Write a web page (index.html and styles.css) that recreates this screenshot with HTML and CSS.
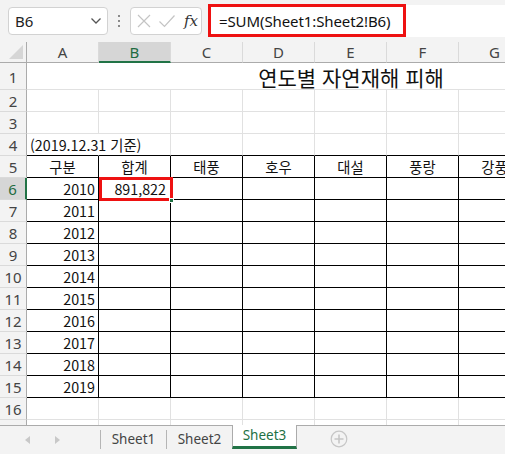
FILE: index.html
```html
<!DOCTYPE html>
<html lang="ko">
<head>
<meta charset="utf-8">
<link rel="stylesheet" href="styles.css">
</head>
<body>
<div class="app">
  <div class="toolbar">
    <div class="namebox">
      <span class="name">B6</span>
      <svg class="chev" width="12" height="8" viewBox="0 0 12 8"><path d="M1.5 1.5 L6 6 L10.5 1.5" fill="none" stroke="#555" stroke-width="1.3"/></svg>
    </div>
    <div class="dots"><i></i><i></i><i></i></div>
    <div class="fxbox">
      <svg width="16" height="16" viewBox="0 0 16 16"><path d="M2 2 L14 14 M14 2 L2 14" stroke="#c4c4c4" stroke-width="1.2" fill="none"/></svg>
      <svg width="18" height="16" viewBox="0 0 18 16"><path d="M1.5 8.5 L6.5 13.5 L16.5 2.5" stroke="#c4c4c4" stroke-width="1.2" fill="none"/></svg>
      <span class="fx">fx</span>
    </div>
    <div class="formula"><span class="ftext">=SUM(Sheet1:Sheet2!B6)</span><span class="fmark"></span></div>
  </div>

  <div class="sheet">
    <div class="corner"><svg width="14" height="14" viewBox="0 0 14 14"><path d="M14 0 L14 14 L0 14 Z" fill="#d6d6d6"/></svg></div>
    <div class="ch">A</div><div class="ch sel">B</div><div class="ch">C</div><div class="ch">D</div><div class="ch">E</div><div class="ch">F</div><div class="ch">G</div><div class="ch">H</div><div class="ch">I</div>

    <div class="rh r1">1</div>
    <div class="c merged r1"><span class="title">연도별 자연재해 피해</span></div>

    <div class="rh">2</div><div class="c"></div><div class="c"></div><div class="c"></div><div class="c"></div><div class="c"></div><div class="c"></div><div class="c"></div><div class="c"></div><div class="c"></div>
    <div class="rh">3</div><div class="c"></div><div class="c"></div><div class="c"></div><div class="c"></div><div class="c"></div><div class="c"></div><div class="c"></div><div class="c"></div><div class="c"></div>
    <div class="rh">4</div><div class="c tt noright"><span class="over">(2019.12.31 기준)</span></div><div class="c tt"></div><div class="c tt"></div><div class="c tt"></div><div class="c tt"></div><div class="c tt"></div><div class="c tt"></div><div class="c tt"></div><div class="c"></div>

    <div class="rh">5</div><div class="c b ctr">구분</div><div class="c b ctr">합계</div><div class="c b ctr">태풍</div><div class="c b ctr">호우</div><div class="c b ctr">대설</div><div class="c b ctr">풍랑</div><div class="c b ctr">강풍</div><div class="c b ctr">지진</div><div class="c"></div>

    <div class="rh rsel">6</div><div class="c b num">2010</div><div class="c b num active">891,822<span class="mark"></span><span class="handle"></span></div><div class="c b"></div><div class="c b"></div><div class="c b"></div><div class="c b"></div><div class="c b"></div><div class="c b"></div><div class="c"></div>
    <div class="rh">7</div><div class="c b num">2011</div><div class="c b"></div><div class="c b"></div><div class="c b"></div><div class="c b"></div><div class="c b"></div><div class="c b"></div><div class="c b"></div><div class="c"></div>
    <div class="rh">8</div><div class="c b num">2012</div><div class="c b"></div><div class="c b"></div><div class="c b"></div><div class="c b"></div><div class="c b"></div><div class="c b"></div><div class="c b"></div><div class="c"></div>
    <div class="rh">9</div><div class="c b num">2013</div><div class="c b"></div><div class="c b"></div><div class="c b"></div><div class="c b"></div><div class="c b"></div><div class="c b"></div><div class="c b"></div><div class="c"></div>
    <div class="rh">10</div><div class="c b num">2014</div><div class="c b"></div><div class="c b"></div><div class="c b"></div><div class="c b"></div><div class="c b"></div><div class="c b"></div><div class="c b"></div><div class="c"></div>
    <div class="rh">11</div><div class="c b num">2015</div><div class="c b"></div><div class="c b"></div><div class="c b"></div><div class="c b"></div><div class="c b"></div><div class="c b"></div><div class="c b"></div><div class="c"></div>
    <div class="rh">12</div><div class="c b num">2016</div><div class="c b"></div><div class="c b"></div><div class="c b"></div><div class="c b"></div><div class="c b"></div><div class="c b"></div><div class="c b"></div><div class="c"></div>
    <div class="rh">13</div><div class="c b num">2017</div><div class="c b"></div><div class="c b"></div><div class="c b"></div><div class="c b"></div><div class="c b"></div><div class="c b"></div><div class="c b"></div><div class="c"></div>
    <div class="rh">14</div><div class="c b num">2018</div><div class="c b"></div><div class="c b"></div><div class="c b"></div><div class="c b"></div><div class="c b"></div><div class="c b"></div><div class="c b"></div><div class="c"></div>
    <div class="rh">15</div><div class="c b num">2019</div><div class="c b"></div><div class="c b"></div><div class="c b"></div><div class="c b"></div><div class="c b"></div><div class="c b"></div><div class="c b"></div><div class="c"></div>
    <div class="rh">16</div><div class="c"></div><div class="c"></div><div class="c"></div><div class="c"></div><div class="c"></div><div class="c"></div><div class="c"></div><div class="c"></div><div class="c"></div>
    <div class="rh">17</div><div class="c"></div><div class="c"></div><div class="c"></div><div class="c"></div><div class="c"></div><div class="c"></div><div class="c"></div><div class="c"></div><div class="c"></div>
  </div>

  <div class="tabs">
    <div class="arrows">
      <svg width="6" height="8" viewBox="0 0 6 8"><path d="M5 0 L5 8 L0 4 Z" fill="#c8c8c8"/></svg>
      <svg width="6" height="8" viewBox="0 0 6 8"><path d="M1 0 L1 8 L6 4 Z" fill="#c8c8c8"/></svg>
    </div>
    <div class="tab">Sheet1</div>
    <div class="tab">Sheet2</div>
    <div class="tab on">Sheet3</div>
    <div class="add">
      <svg width="18" height="18" viewBox="0 0 18 18"><circle cx="9" cy="9" r="7.8" fill="none" stroke="#c6c6c6" stroke-width="1.2"/><path d="M9 4.5 V13.5 M4.5 9 H13.5" stroke="#c6c6c6" stroke-width="1.6"/></svg>
    </div>
  </div>
</div>
</body>
</html>
```

FILE: styles.css
```css
html, body {
  margin: 0;
  padding: 0;
  background: #fff;
}
body {
  width: 505px;
  height: 454px;
  overflow: hidden;
  font-family: "Noto Sans", "Open Sans", sans-serif;
}
.app {
  display: flex;
  flex-direction: column;
  width: 505px;
  height: 454px;
  overflow: hidden;
}
.toolbar {
  height: 42px;
  flex: none;
  background: #f3f3f3;
  display: flex;
  align-items: flex-start;
  padding-left: 8px;
  box-sizing: border-box;
}
.namebox {
  margin-top: 7px;
  width: 100px;
  height: 28px;
  box-sizing: border-box;
  background: #fff;
  border: 1px solid #d2d2d2;
  border-radius: 4px;
  display: flex;
  align-items: center;
  justify-content: space-between;
  padding: 0 5px 0 6px;
}
.name {
  font-size: 15px;
  color: #222;
}
.dots {
  width: 22px;
  height: 42px;
  display: flex;
  flex-direction: column;
  align-items: center;
  justify-content: center;
  gap: 3px;
}
.dots i {
  display: block;
  width: 2px;
  height: 2px;
  background: #8a8a8a;
}
.fxbox {
  margin-top: 7px;
  width: 72px;
  height: 28px;
  box-sizing: border-box;
  background: #fff;
  border: 1px solid #d2d2d2;
  border-radius: 4px;
  display: flex;
  align-items: center;
  gap: 6px;
  padding-left: 5px;
}
.fx {
  font-family: "DejaVu Serif", "Liberation Serif", serif;
  font-style: italic;
  font-size: 15px;
  color: #333;
  margin-left: 2px;
}
.formula {
  margin-top: 5px;
  margin-left: 6px;
  flex: 1;
  height: 32px;
  background: #fff;
  position: relative;
  display: flex;
  align-items: center;
  padding-left: 11px;
}
.ftext {
  font-size: 15px;
  color: #111;
  letter-spacing: -0.1px;
}
.fmark {
  position: absolute;
  left: 0;
  top: -1px;
  width: 198px;
  height: 33px;
  box-sizing: border-box;
  border: 3px solid #ee1111;
}

.sheet {
  flex: none;
  height: 383px;
  overflow: hidden;
  display: grid;
  grid-template-columns: 27px repeat(9, 72px);
  grid-template-rows: 21px 27px repeat(16, 22px);
  width: 675px;
  font-family: "Noto Sans CJK KR", "Noto Sans", sans-serif;
  font-size: 14.3px;
  color: #111;
}
.corner {
  background: #f3f3f3;
  border-right: 1px solid #ababab;
  border-bottom: 1px solid #ababab;
  box-sizing: border-box;
  display: flex;
  align-items: flex-end;
  justify-content: flex-end;
  padding: 0 3px 3px 0;
}
.ch {
  background: #f3f3f3;
  border-right: 1px solid #dadada;
  border-bottom: 1px solid #ababab;
  box-sizing: border-box;
  font-family: "Noto Sans", "Open Sans", sans-serif;
  font-size: 15px;
  color: #444;
  display: flex;
  align-items: center;
  justify-content: center;
}
.ch.sel {
  background: #d6d6d6;
  color: #1e6b41;
  border-bottom: 2px solid #217346;
}
.rh {
  background: #f3f3f3;
  border-right: 1px solid #ababab;
  border-bottom: 1px solid #dadada;
  box-sizing: border-box;
  font-family: "Noto Sans", "Open Sans", sans-serif;
  font-size: 15px;
  color: #444;
  display: flex;
  align-items: center;
  justify-content: center;
  padding-top: 1px;
}
.rh.rsel {
  background: #d6d6d6;
  color: #1e6b41;
  border-right: 2px solid #217346;
}
.c {
  box-sizing: border-box;
  border-right: 1px solid #e1e1e1;
  border-bottom: 1px solid #e1e1e1;
  display: flex;
  align-items: center;
  white-space: nowrap;
  padding: 0 3px;
  overflow: visible;
  position: relative;
}
.merged {
  grid-column: 2 / -1;
  justify-content: center;
  border-right: none;
}
.title {
  font-size: 21px;
  color: #111;
  padding-top: 1px;
}
.noright {
  border-right-color: transparent;
}
.over {
  position: relative;
  z-index: 2;
  background: #fff;
}
.tt {
  border-bottom: 1px solid #000;
}
.b {
  border-right: 1px solid #000;
  border-bottom: 1px solid #000;
}
.ctr {
  justify-content: center;
}
.num {
  justify-content: flex-end;
}
.active {
  padding-right: 4px;
  z-index: 3;
}
.mark {
  position: absolute;
  left: 0;
  top: -1px;
  right: -3px;
  bottom: -2px;
  border: 3px solid #ee1111;
  z-index: 3;
}
.handle {
  position: absolute;
  right: -4px;
  bottom: -4px;
  width: 5px;
  height: 5px;
  background: #217346;
  border: 1px solid #fff;
  box-sizing: border-box;
  z-index: 4;
}

.tabs {
  flex: none;
  height: 29px;
  background: #f3f3f3;
  border-top: 1px solid #ababab;
  box-sizing: border-box;
  display: flex;
  align-items: stretch;
  font-family: "Noto Sans", "Open Sans", sans-serif;
  font-size: 13.5px;
  color: #444;
}
.arrows {
  width: 100px;
  display: flex;
  align-items: center;
  gap: 23px;
  padding-left: 25px;
  box-sizing: border-box;
}
.tab {
  width: 66px;
  display: flex;
  align-items: center;
  justify-content: center;
  box-sizing: border-box;
  border-left: 1px solid #b5b5b5;
  margin: 4px 0 5px;
  padding-bottom: 1px;
}
.tab.on {
  margin: -1px 0 0;
  width: 65px;
  background: #fff;
  color: #1e7145;
  border-left: 1px solid #ababab;
  border-right: 1px solid #ababab;
  border-bottom: 3px solid #217346;
  height: 24px;
}
.tab.on + .add {
  margin-left: 33px;
}
.add {
  display: flex;
  align-items: center;
  padding-bottom: 3px;
}
```
